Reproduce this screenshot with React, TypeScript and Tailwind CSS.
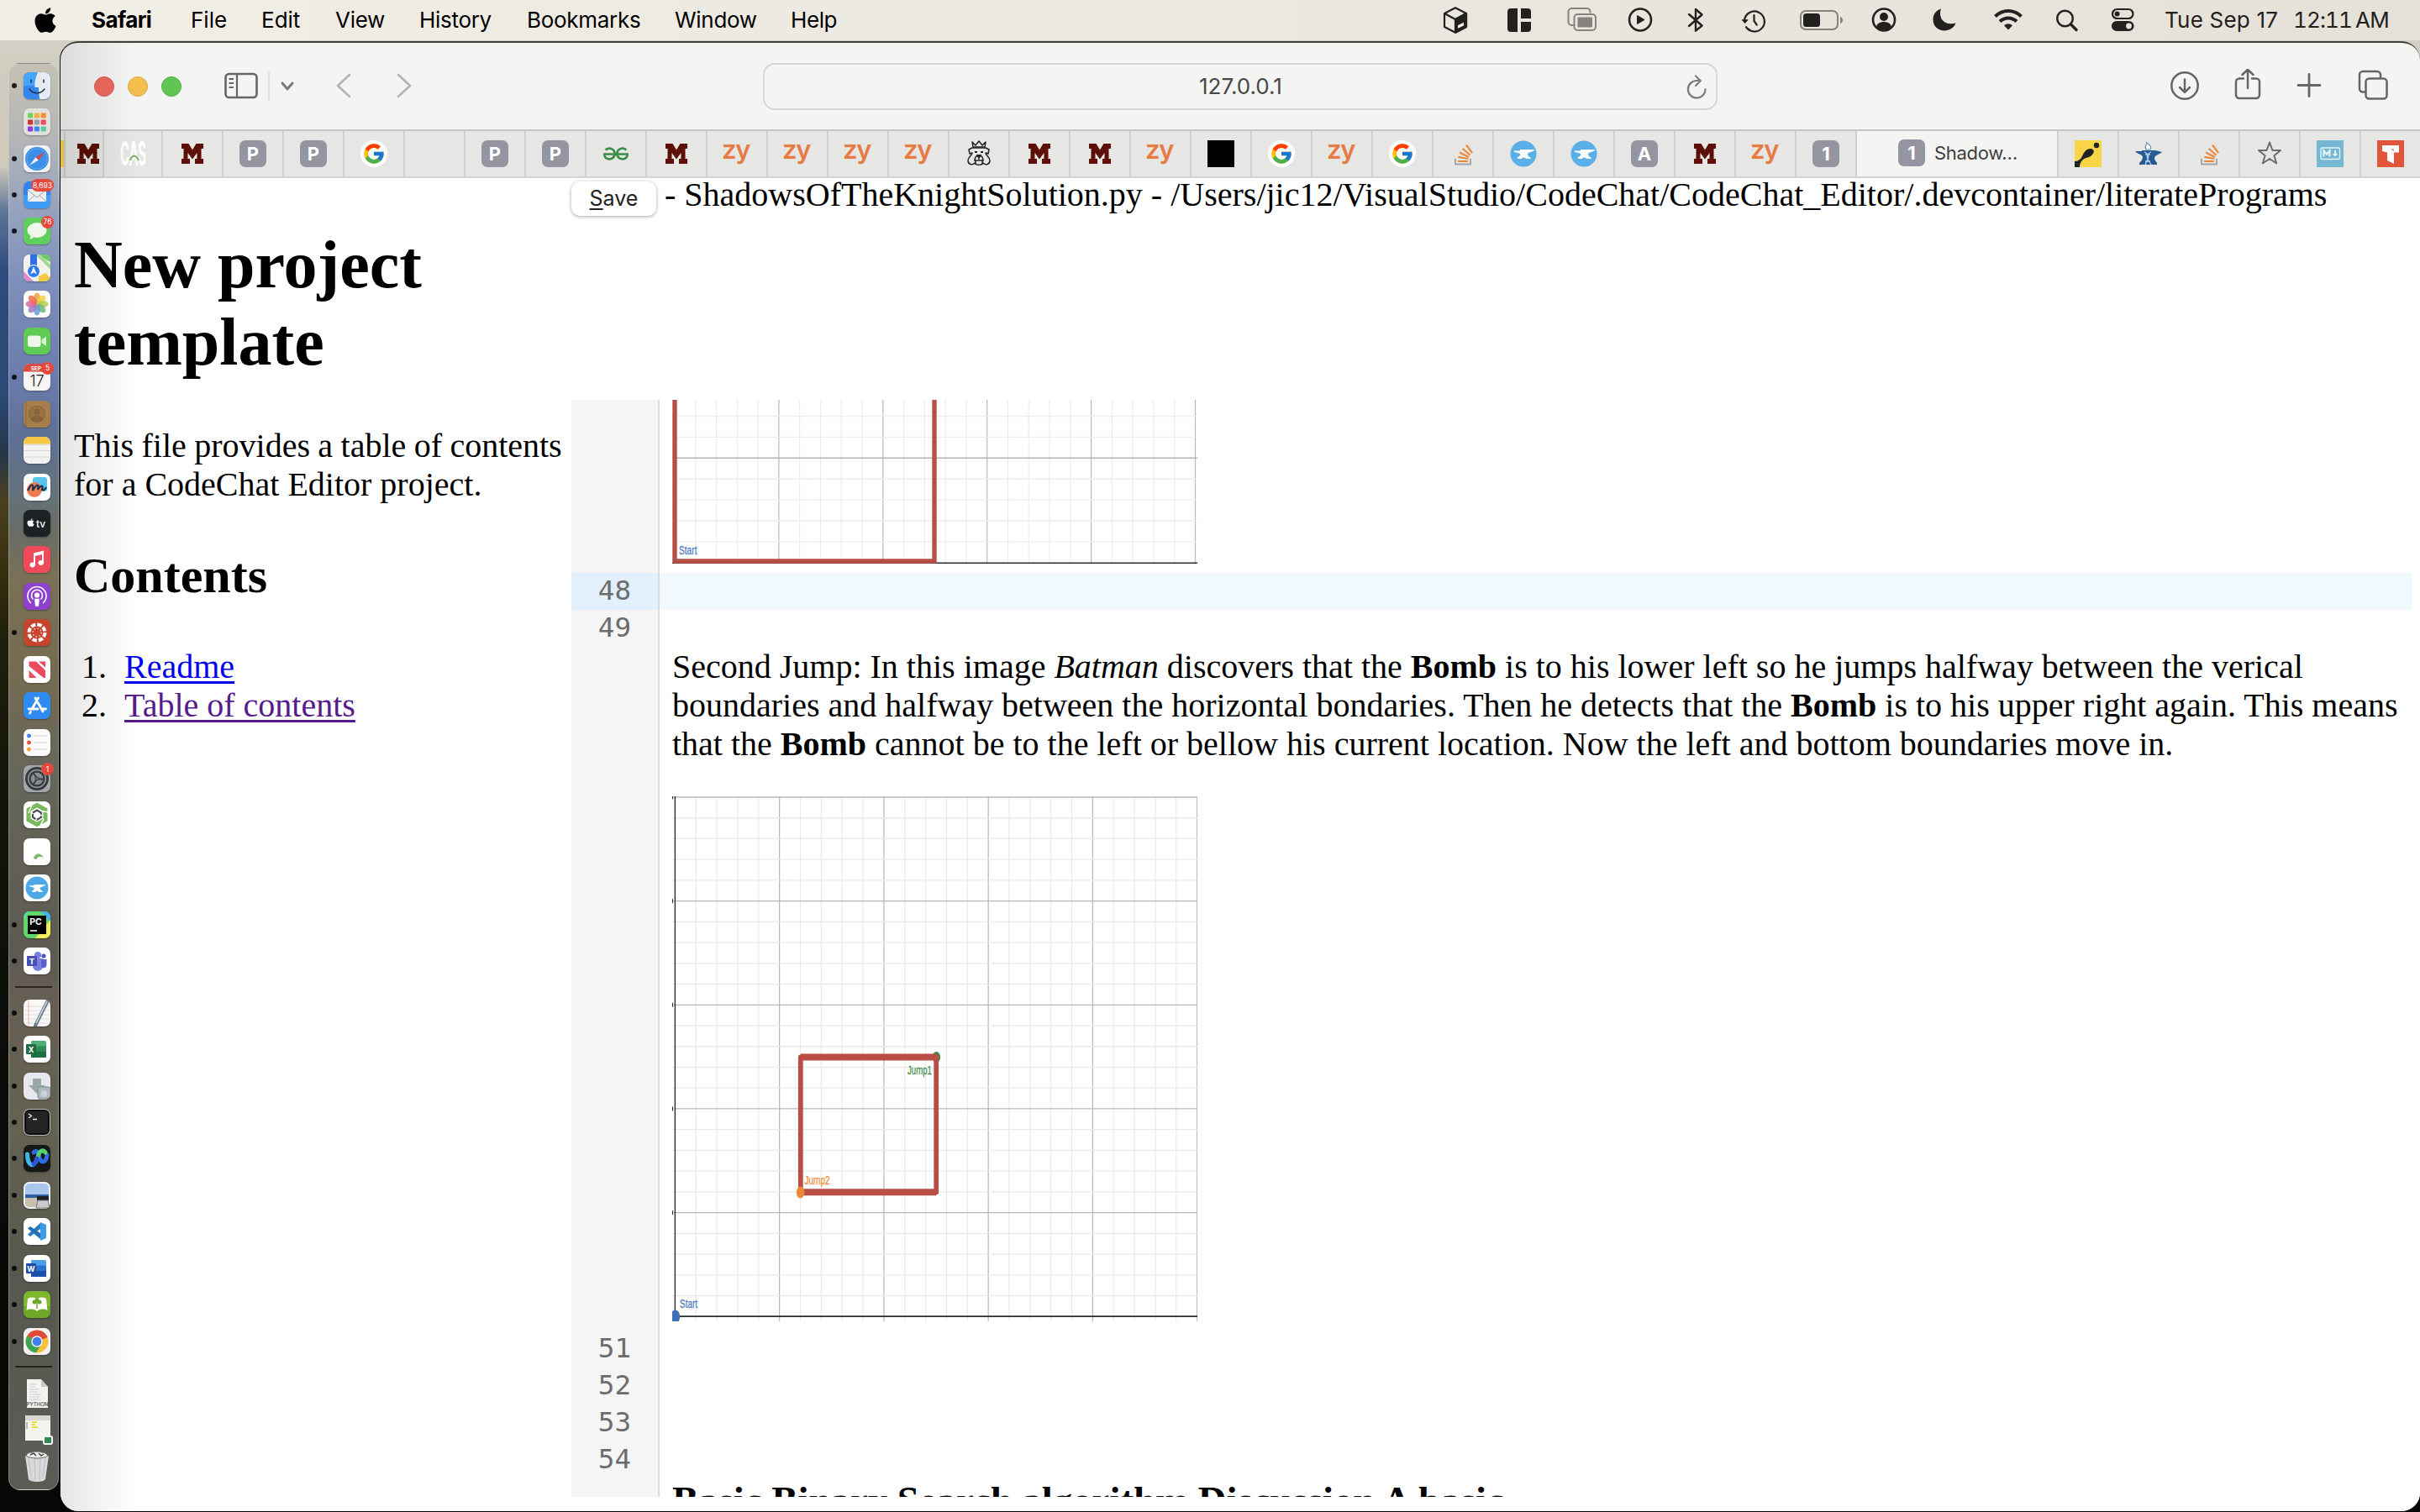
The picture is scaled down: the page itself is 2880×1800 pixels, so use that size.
import React from "react";
import { FaApple } from "react-icons/fa";
import { FcGoogle } from "react-icons/fc";
import { SiGeeksforgeeks } from "react-icons/si";

/* ---------- menu bar ---------- */

const menus: [string, string][] = [
  ["Safari", "w-[118px] font-bold tracking-[-0.6px]"],
  ["File", "w-[84px]"],
  ["Edit", "w-[88px]"],
  ["View", "w-[100px] tracking-[-0.3px]"],
  ["History", "w-[128px] tracking-[-0.3px]"],
  ["Bookmarks", "w-[176px] tracking-[-0.3px]"],
  ["Window", "w-[138px] tracking-[-0.3px]"],
  ["Help", "w-[100px] tracking-[-0.4px]"],
];

const ink = "#222120";

function StatusIcons() {
  return (
    <>
      <svg className="w-12 h-12 shrink-0" viewBox="0 0 48 48" fill="none" stroke={ink} strokeWidth="2.2" strokeLinejoin="round">
        <path d="M24 9.300 37 16v16L24 38.700 11 32V16z" />
        <path d="M11 16l13 7 13-7" />
        <path d="M24 23 37 16v16l-13 6.700z" fill={ink} />
        <path d="M27.500 33v-2.500l6-3v2.500z" fill="#fff" stroke="#e9e5dc" strokeWidth="1.2" />
      </svg>
      <svg className="ml-[28px] w-12 h-12 shrink-0" viewBox="0 0 48 48" fill={ink}>
        <path d="M14 10h8v28h-8a4 4 0 0 1-4-4V14a4 4 0 0 1 4-4zM26 10h8a4 4 0 0 1 4 4v8H26zM26 26h12v8a4 4 0 0 1-4 4h-8z" />
      </svg>
      <svg className="ml-[26px] w-12 h-12 shrink-0" viewBox="0 0 48 48" fill="none" stroke="#85837e" strokeWidth="2">
        <path d="M15 30h-2.500a4 4 0 0 1-4-4V14a4 4 0 0 1 4-4h18a4 4 0 0 1 4 4v1.500" />
        <rect x="15.500" y="17" width="25.500" height="19" rx="4" />
        <rect x="19.500" y="20.500" width="17.500" height="12" rx="1" fill="#85837e" stroke="none" />
      </svg>
      <svg className="ml-[22px] w-12 h-12 shrink-0" viewBox="0 0 48 48" fill="none" stroke={ink} strokeWidth="2.600">
        <circle cx="24" cy="23.500" r="13" />
        <path d="M20.500 18.500v10l8.500-5z" fill={ink} strokeWidth="1" />
      </svg>
      <svg className="ml-[18px] w-12 h-12 shrink-0" viewBox="0 0 48 48" fill="none" stroke={ink} strokeWidth="2.400" strokeLinejoin="round" strokeLinecap="round">
        <path d="M16 17l15.500 13.500L24 36.700V11l7.500 6.500L16 31" />
      </svg>
      <svg className="ml-[21px] w-12 h-12 shrink-0" viewBox="0 0 48 48" fill="none" stroke={ink} strokeWidth="2.200" strokeLinecap="round">
        <path d="M13 24a12 12 0 1 1 1.500 7.500a12 12 0 0 0 5 4.300" />
        <path d="M10.500 24l3.200 3.500 3-3.500z" fill={ink} strokeWidth="1" />
        <path d="M24.500 18v7l3.200 4.500" />
      </svg>
      <svg className="ml-[28px] w-14 h-12 shrink-0" viewBox="0 0 56 48">
        <rect x="4" y="13" width="44" height="22" rx="6" fill="none" stroke="#85837e" strokeWidth="2" />
        <rect x="7" y="16" width="20" height="16" rx="3.500" fill={ink} />
        <path d="M51 20c4 1 4 7 0 8z" fill="#85837e" />
      </svg>
      <svg className="ml-[23px] w-12 h-12 shrink-0" viewBox="0 0 48 48" fill="none" stroke={ink} strokeWidth="2.600">
        <circle cx="24" cy="23.500" r="13" />
        <circle cx="24" cy="20" r="5" fill={ink} stroke="none" />
        <path d="M15 32c1-8 17-8 18 0-4 5-14 5-18 0z" fill={ink} stroke="none" />
      </svg>
      <svg className="ml-[24px] w-12 h-12 shrink-0" viewBox="0 0 48 48" fill={ink}>
        <path d="M20 10.500c-4 12 5 20.500 17.500 17-5 13-27 12-27-4.500 0-6 4-11 9.500-12.500z" />
      </svg>
      <svg className="ml-[28px] w-12 h-12 shrink-0" viewBox="0 0 48 48" fill="none" stroke={ink} strokeWidth="4">
        <path d="M8.500 19.500c9-8.700 22-8.700 31 0" />
        <path d="M14 25.500c6-5.500 14-5.500 20 0" />
        <path d="M24 35.500l-5-5.300c3-2.700 7-2.700 10 0z" fill={ink} stroke="none" />
      </svg>
      <svg className="ml-[22px] w-12 h-12 shrink-0" viewBox="0 0 48 48" fill="none" stroke={ink} strokeWidth="2.500" strokeLinecap="round">
        <circle cx="21.500" cy="22" r="9.300" />
        <path d="M28.500 29l6.500 6.500" strokeWidth="3.400" />
      </svg>
      <svg className="ml-[18px] w-12 h-12 shrink-0" viewBox="0 0 48 48" fill="none" stroke={ink} strokeWidth="2.200">
        <rect x="12" y="11" width="24.500" height="11" rx="5.500" />
        <circle cx="17.600" cy="16.500" r="3" fill={ink} stroke="none" />
        <rect x="12" y="26" width="24.500" height="10" rx="5" fill={ink} />
        <circle cx="31.500" cy="31" r="3.400" fill="#e7e3da" stroke="none" />
      </svg>
    </>
  );
}

function MenuBar() {
  return (
    <header className="flex h-[48px] shrink-0 items-center bg-linear-to-r from-[#f1eee6] via-[#ebe8df] to-[#e5e1d9] text-[26px] leading-[48px] text-black">
      <div className="flex w-[109px] justify-center pr-[2px]">
        <FaApple className="h-[34px] w-auto" />
      </div>
      {menus.map(([m, c]) => (
        <span key={m} className={`shrink-0 whitespace-nowrap -mt-[1px] ${c}`}>{m}</span>
      ))}
      <div className="ml-auto flex items-center text-[#222120]">
        <StatusIcons />
        <span className="ml-[26px] flex w-[304px] -mt-[1px] whitespace-nowrap">
          <span className="w-[153px] tracking-[0.2px]">Tue Sep 17</span>
          <span className="tracking-[-0.9px] [font-variant-numeric:tabular-nums]">12:11</span>
          <span className="ml-[4px] tracking-[-0.6px]">AM</span>
        </span>
      </div>
    </header>
  );
}

/* ---------- tab icons ---------- */

const BlockM = () => (
  <svg className="h-[24px] w-[26px]" viewBox="0 0 26 24" fill="#5c0f06">
    <path d="M0 0h8.500l4.500 7.500L17.500 0H26v6h-2.500v12H26v6H16v-6h2.500v-7L13 18.500 7.500 11v7H10v6H0v-6h2.500V6H0z" />
  </svg>
);
const Zy = () => <span className="-mt-[10px] mr-[3px] text-[31px] leading-[32px] font-semibold tracking-[-1.500px] text-[#e67c43]">zy</span>;
const Letter = ({ c }: { c: string }) => (
  <span className="flex size-8 items-center justify-center rounded-[7px] bg-[#9495a1] text-[22px] font-bold text-white">{c}</span>
);
const G = () => (
  <span className="flex size-8 items-center justify-center rounded-full bg-white"><FcGoogle size={28} /></span>
);
const Stack = () => (
  <svg className="size-8" viewBox="0 0 32 32" fill="none">
    <path d="M7 22v6.500h18V22" stroke="#a3a7ad" strokeWidth="2" />
    <g stroke="#e98a3f" strokeWidth="2.200">
      <path d="M10 25h12M10.300 19.800l12 2.200M12 14.500l11 5.500M15.500 9.800l9 8M20 5.500l7 9.500" />
    </g>
  </svg>
);
const anvil = "M4 12.500h8V11h17c0 2-4 2.500-7 4-1.500 1-1.500 2.500 0 4l2.500 1.500V22H19c-1-2-4-2-5 0H9v-1.500l2-1.500c2-2 1.500-3-1-4-3-.3-5-1-6-2.500z";
const Anvil = () => (
  <svg className="size-8" viewBox="0 0 32 32">
    <circle cx="16" cy="16" r="15.500" fill="#5aafe8" />
    <path d={anvil} fill="#fff" />
  </svg>
);
const Cas = () => (
  <svg className="h-[52px] w-8" viewBox="0 -10 32 52">
    <text transform="translate(0 30) scale(.5 1)" x="0" y="0" fontSize="39" fontWeight="700" fill="#fff" textLength="62" lengthAdjust="spacingAndGlyphs" fontFamily="Inter, sans-serif">CAS</text>
    <path d="M12 24c2-7 7-7 10 0" stroke="#79b866" strokeWidth="2" fill="none" />
  </svg>
);
const Bulldog = () => (
  <svg className="size-8" viewBox="0 0 32 32" fill="none" stroke="#222" strokeWidth="1.500" strokeLinejoin="round">
    <path d="M9 8 8 2l4 4 4-5 4 5 4-4-1 6z" />
    <path d="M8 9h16l4 2-1 5-3-1c0 3 5 5 5 9 0 5-5 6-8 3-1 3-9 3-10 0-3 3-8 2-8-3 0-4 5-6 5-9l-3 1-1-5z" />
    <path d="M11 25c0-6 3-7 5-7s5 1 5 7M12 28v-4h8v4M16 18v5" />
    <path d="M11 14h3M18 14h3M14 18h4l-2 2z" fill="#222" strokeWidth="2.200" />
  </svg>
);
const YellowMark = () => (
  <svg className="size-8" viewBox="0 0 32 32">
    <rect width="32" height="32" fill="#f8d547" />
    <path d="M0 25c4 0 7-2 9-6 2-5 5-9 10-9 4 0 5 4 2 7-3 4-7 3-11 6-3 3-4 5-4 9H0z" fill="#1e2326" />
    <circle cx="26" cy="6" r="3.200" fill="#1e2326" />
  </svg>
);
const Torch = () => (
  <svg className="size-8" viewBox="0 0 32 32">
    <path d="M0 13h8v-1h16l8 2c-3 3-8 3-9 7 0 3 2 4 3 6v2H5v-2c2-2 4-4 4-7-1-4-6-3-9-7z" fill="#265a94" />
    <path d="M13 11c-3-5 2-6 1-8 3 2 6 5 4 8z" fill="#fff" stroke="#6b93bd" strokeWidth="1.200" />
    <path d="M11 14c9 4 3 10 1 15M19 14c-9 4-3 10 0 15M12 17h6M12 25h6" stroke="#b9cfe6" strokeWidth="1.300" fill="none" />
  </svg>
);
const Star = () => (
  <svg className="size-8" viewBox="0 0 32 32" fill="none" stroke="#6b6b6b" strokeWidth="2" strokeLinejoin="round">
    <path d="M16 2.500l3.500 9.500h9.500l-7.600 6.200 2.800 9.300L16 22l-8.200 5.500 2.800-9.300L3 12h9.500z" />
  </svg>
);
const Markdown = () => (
  <svg className="size-8" viewBox="0 0 32 32" fill="none" stroke="#e6f4f9">
    <rect width="32" height="32" fill="#76b8d3" stroke="none" />
    <rect x="5" y="9" width="22.500" height="13.500" rx="2" strokeWidth="1.300" />
    <path d="M8.500 19.500v-7l3.500 4 3.500-4v7M22 12v6" strokeWidth="2.200" />
    <path d="M18.800 16h6.400L22 19.500z" fill="#e6f4f9" stroke="none" />
  </svg>
);
const RedT = () => (
  <svg className="size-8" viewBox="0 0 32 32">
    <rect width="32" height="32" fill="#e15538" />
    <path d="M6 6h20v8.500h-6V28l-8-4V14.500L6 13z" fill="#fff" />
    <path d="M20 14.500V10l-4 .500 4 3z" fill="#e8a08e" />
  </svg>
);

const leftTabs: (() => React.ReactNode)[] = [
  BlockM, () => <Letter c="P" />, () => <Letter c="P" />, G, () => null, () => <Letter c="P" />, () => <Letter c="P" />,
  () => <SiGeeksforgeeks size={30} color="#3c8d47" />, BlockM, Zy, Zy, Zy, Zy, Bulldog, BlockM, BlockM, Zy,
  () => <span className="size-8 bg-black" />, G, Zy, G, Stack, Anvil, Anvil, () => <Letter c="A" />, BlockM, Zy, () => <Letter c="1" />,
];
const rightTabs = [YellowMark, Torch, Stack, Star, Markdown, RedT];

const cell = "flex shrink-0 items-center justify-center border-r-2 border-[#d0d0cf]";

function TabBar() {
  return (
    <div className="flex h-[58px] shrink-0 overflow-hidden border-t-2 border-b-2 border-t-[#c6c6c5] border-b-[#d3d3d2] bg-[#e6e6e5]">
      <div className={`${cell} w-[6px]`}><span className="h-8 w-full bg-[#f8d547]" /></div>
      <div className={`${cell} w-[46px] pl-[10px]`}><BlockM /></div>
      <div className={`${cell} w-[70px] pl-[2px]`}><Cas /></div>
      {leftTabs.map((I, i) => (
        <div key={i} className={`${cell} w-[72px]`}>{I()}</div>
      ))}
      <div className="-mt-[2px] flex w-[240px] shrink-0 items-center gap-[11px] border-r-2 border-[#d0d0cf] bg-[#f4f4f2] pl-[49px]">
        <Letter c="1" />
        <span className="text-[22px] tracking-[-0.3px] text-[#3f3f3f]">Shadow…</span>
      </div>
      {rightTabs.map((I, i) => (
        <div key={i} className={`${cell} w-[72px]`}><I /></div>
      ))}
    </div>
  );
}

function Toolbar() {
  return (
    <div className="flex h-[103px] shrink-0 items-center text-[#656563]">
      <div className="flex w-[195px] gap-4 pl-[40px]">
        <span className="size-6 rounded-full border border-[#d5574c] bg-[#ed6a5e]" />
        <span className="size-6 rounded-full border border-[#dba53b] bg-[#f5bf4f]" />
        <span className="size-6 rounded-full border border-[#4fae3f] bg-[#61c554]" />
      </div>
      <svg className="h-[32px] w-[40px] shrink-0 -mt-[2px]" viewBox="0 0 40 32" fill="none" stroke="currentColor" strokeWidth="2.600">
        <rect x="1.500" y="2" width="37" height="28" rx="4" />
        <path d="M15 2v28" strokeWidth="2.200" />
        <path d="M5.500 8h5.500M5.500 13h5.500M5.500 18h5.500" strokeWidth="2" />
      </svg>
      <span className="ml-[12px] h-[36px] w-[2px] bg-[#e2e2e0]" />
      <svg className="ml-[12px] h-[14px] w-[18px]" viewBox="0 0 18 14" fill="none" stroke="#7a7a78" strokeWidth="3" strokeLinecap="round" strokeLinejoin="round">
        <path d="M3 3l6 7 6-7" />
      </svg>
      <svg className="ml-[47px] h-[32px] w-[24px] -mt-[2px]" viewBox="0 0 24 32" fill="none" stroke="#b4b4b2" strokeWidth="2.600" strokeLinecap="round" strokeLinejoin="round">
        <path d="M18 3 4 16l14 13" />
      </svg>
      <svg className="ml-[48px] h-[32px] w-[24px] -mt-[2px]" viewBox="0 0 24 32" fill="none" stroke="#b4b4b2" strokeWidth="2.600" strokeLinecap="round" strokeLinejoin="round">
        <path d="M4 3l14 13L4 29" />
      </svg>
      <div className="ml-[414px] flex h-[56px] w-[1136px] shrink-0 items-center rounded-[14px] border-2 border-[#d6d6d5] pl-[517px]">
        <span className="w-[579px] text-[26px] text-[#474746]">127.0.0.1</span>
        <svg className="h-[30px] w-[26px]" viewBox="0 0 26 30" fill="none" stroke="#7c7c7a" strokeWidth="2.200" strokeLinecap="round" strokeLinejoin="round">
          <path d="M16.500 8H13a10.300 10.300 0 1 0 10.500 10.300" />
          <path d="M12 2.500l5.800 5.800L12 14" />
        </svg>
      </div>
      <svg className="ml-[538px] h-[40px] w-[36px] -mt-[2px]" viewBox="0 0 36 40" fill="none" stroke="currentColor" strokeWidth="2.500" strokeLinecap="round" strokeLinejoin="round">
        <circle cx="18" cy="20" r="15.700" /><path d="M18 12.500v15M12 22l6 5.800 6-5.800" />
      </svg>
      <svg className="ml-[40px] h-[40px] w-[34px] -mt-[2px]" viewBox="0 0 34 40" fill="none" stroke="currentColor" strokeWidth="2.500" strokeLinecap="round" strokeLinejoin="round">
        <path d="M12 11.500H7a4 4 0 0 0-4 4V31a4 4 0 0 0 4 4h20a4 4 0 0 0 4-4V15.500a4 4 0 0 0-4-4h-5M17 23V1M10.500 7 17 .800 23.500 7" />
      </svg>
      <svg className="ml-[41px] h-[40px] w-[30px] -mt-[2px]" viewBox="0 0 30 40" fill="none" stroke="currentColor" strokeWidth="2.800" strokeLinecap="round">
        <path d="M15 6.500v26M2 19.500h26" />
      </svg>
      <svg className="ml-[42px] h-[40px] w-[38px] -mt-[2px]" viewBox="0 0 38 40" fill="none" stroke="currentColor" strokeWidth="2.500" strokeLinejoin="round">
        <path d="M10 27.500H7a4 4 0 0 1-4-4V7a4 4 0 0 1 4-4h17a4 4 0 0 1 4 4v4.500" />
        <rect x="10.500" y="11.500" width="25" height="24" rx="4" />
      </svg>
    </div>
  );
}

/* ---------- dock ---------- */

type Tile = { bg: string; art?: React.ReactNode; dot?: boolean; badge?: string };

const T = (p: { x: number; y: number; s: number; f?: string; w?: number; children: string }) => (
  <text x={p.x} y={p.y} fontSize={p.s} fill={p.f ?? "#fff"} fontWeight={p.w ?? 700} textAnchor="middle" fontFamily="Inter, sans-serif">{p.children}</text>
);

const petals = ["#f2a43a", "#f0d43c", "#b6cf4a", "#6dbb78", "#6aa0d8", "#9a80c4", "#d46aa0", "#ec6b56"];
const grid9 = ["#6cd45b", "#f6b03c", "#f0913a", "#d0342c", "#9a9da1", "#ee4b63", "#8b3fd0", "#3f8bf2", "#5cc9a0"];

const office = (c1: string, c2: string, c3: string, l: string) => (
  <>
    <rect x="9" y="6" width="18" height="20" rx="1.500" fill={c1} />
    <path d="M9 12.500h18v6.500H9z" fill={c2} /><path d="M9 19h18v7H9z" fill={c3} />
    <rect x="3" y="10" width="12" height="12" rx="1" fill={c3} />
    <T x={9} y={19.500} s={9}>{l}</T>
  </>
);

const tiles: Tile[] = [
  { bg: "#2f7df0", dot: true, art: <><rect width="32" height="32" fill="#45a6f7" /><rect y="16" width="18" height="16" fill="#2f6fe8" opacity=".6" /><path d="M17 0c-3 7-4 12-3.500 18H18c0 5 .5 9 1.500 14H32V0z" fill="#e6eaf2" /><path d="M7 20c5 6.500 13 6.500 18 0M9 9v3M24 9v3" stroke="#1b2733" strokeWidth="1.400" fill="none" strokeLinecap="round" /></> },
  { bg: "#e3e1de", art: <>{grid9.map((c, i) => <rect key={i} x={5 + (i % 3) * 7.800} y={5.500 + Math.floor(i / 3) * 8} width="6.200" height="6" rx="1.300" fill={c} />)}</> },
  { bg: "#f0f0f0", dot: true, art: <><circle cx="16" cy="16" r="14" fill="#3b8fe6" /><circle cx="16" cy="16" r="12" fill="none" stroke="#9ccbf5" strokeWidth="1" strokeDasharray="1 1.200" /><path d="M25 8 14.500 14.300l3.200 3.400z" fill="#e8443a" /><path d="M7 24l7.500-9.700 3.200 3.400z" fill="#f3f3f3" /></> },
  { bg: "#3f9cf5", dot: true, badge: "8,693", art: <><rect width="32" height="16" fill="#2f74e8" opacity=".6" /><rect x="5" y="9" width="22" height="15" rx="1.500" fill="#eceef0" /><path d="M5 10l11 9 11-9M5 24l8-7.500M27 24l-8-7.500" stroke="#9aa0a6" strokeWidth="1" fill="none" /></> },
  { bg: "#5fcf5b", dot: true, badge: "76", art: <><ellipse cx="16" cy="15" rx="11.500" ry="9" fill="#eef7ea" /><path d="M8 20c1 3 0 4-1 5.500 3 0 5-1.500 6-3z" fill="#e3f3df" /></> },
  { bg: "#f2f1ec", art: <><path d="M16 0h16v9z" fill="#6ccb64" /><path d="M20 0l12 12v6L14 0z" fill="#a6d99a" /><path d="M8 0h8v20H8z" fill="#2f6fe0" /><path d="M0 20l12 12H0z" fill="#e08ac9" /><path d="M18 26l8-4 6 6v4H18z" fill="#f4c93f" /><circle cx="12" cy="20" r="7.500" fill="#2e7af0" stroke="#fff" strokeWidth="1" /><path d="M12 14.500l3.800 9-3.800-2.300-3.800 2.300z" fill="#fff" /></> },
  { bg: "#fbfbfb", art: <>{petals.map((c, i) => <ellipse key={i} cx="16" cy="9" rx="4" ry="6.500" fill={c} opacity=".85" transform={`rotate(${i * 45} 16 16)`} />)}</> },
  { bg: "#5fcb54", art: <><rect x="5" y="9.500" width="15.500" height="13.500" rx="3" fill="#eef6ea" /><path d="M21.500 14.500l5.500-4v11.500l-5.500-4z" fill="#d9f0d2" /></> },
  { bg: "#f6f5f4", dot: true, badge: "5", art: <><rect width="32" height="9.500" fill="#dd4a40" /><T x={15} y={7.800} s={6.500}>SEP</T><T x={16} y={27} s={18} f="#222" w={300}>17</T></> },
  { bg: "#a67e4b", art: <><circle cx="16" cy="16" r="9.500" fill="#9a7341" stroke="#846238" /><circle cx="16" cy="13" r="3.600" fill="#84633a" /><path d="M9 22c2-6 12-6 14 0-3 3.500-11 3.500-14 0z" fill="#84633a" /><path d="M3 0v32" stroke="#8d6a3d" /></> },
  { bg: "#f3f2f0", art: <><rect width="32" height="8.500" fill="#f7c843" /><path d="M0 9.500h32M0 16.500h32M0 24h32" stroke="#d8d6d2" strokeWidth="1" /></> },
  { bg: "#fdfdfd", art: <><rect x="11" y="4" width="17" height="17" rx="3" fill="#59c3ee" /><circle cx="13" cy="19" r="9" fill="#f07a54" /><path d="M5 20c5-10 7-8 6 0 5-9 8-8 6-1 4-6 7-6 5 0 2 1 4-1 5-3" stroke="#17324f" strokeWidth="2.200" fill="none" /></> },
  { bg: "#1c2124", art: <><FaApple x="3" y="9.5" size={11} color="#fff" /><T x={20.500} y={20.500} s={12} w={500}>tv</T></> },
  { bg: "#ee4a5a", art: <path d="M12 8.500l12-3v14.500a3.300 3 0 1 1-2-2.800V10l-8 2v10.500a3.300 3 0 1 1-2-2.800z" fill="#fff" /> },
  { bg: "#9040cf", art: <g fill="none" stroke="#fff" strokeWidth="1.600"><path d="M9 24a11 11 0 1 1 14 0M11.500 19.500a6.500 6.500 0 1 1 9 0" /><circle cx="16" cy="14.500" r="2.300" fill="#fff" /><path d="M14 19.500h4l-.700 7.500h-2.600z" fill="#fff" /></g> },
  { bg: "#c8452d", dot: true, art: <g fill="none" stroke="#fff"><circle cx="16" cy="16" r="9.500" strokeWidth="4" strokeDasharray="5.460 2" /><circle cx="16" cy="16" r="5" strokeWidth="1.300" strokeDasharray="1.300 2.620" /></g> },
  { bg: "#fff", art: <g fill="#ec4b5f"><path d="M6.500 6.500H15l11 10.500v9h-2L6.500 12z" /><path d="M18 6.500h8v7zM6.500 17l9 9h-9z" /></g> },
  { bg: "#2f8bf0", art: <g stroke="#fff" strokeWidth="2.800" strokeLinecap="round"><path d="M17.500 7 10 20M14 7l9 16M6 20h11M22 20h4.500M8.500 23.500l-1 1.500" /></g> },
  { bg: "#fbfbfa", art: <><g stroke="#cfcfcf" strokeWidth="1"><path d="M12 8h16M12 16h16M12 24h16" /></g><circle cx="6.500" cy="8" r="2.400" fill="#3c82f0" /><circle cx="6.500" cy="16" r="2.400" fill="#e2503f" /><circle cx="6.500" cy="24" r="2.400" fill="#f09a3a" /></> },
  { bg: "#a3a7ab", badge: "1", art: <g fill="none" stroke="#383b3d"><circle cx="16" cy="16" r="12.500" strokeWidth="3" /><circle cx="16" cy="16" r="8.500" strokeWidth="2.500" fill="#8b8f92" /><path d="M16 16l9 1M16 16l-5-8M16 16l-5 8" strokeWidth="1.800" /><circle cx="16" cy="16" r="2" fill="#777" /></g> },
  { bg: "#fff", art: <g fill="none"><path d="M16 4.500 26 10v12L16 27.500 6 22V10z" stroke="#79b95c" strokeWidth="5" /><path d="M11 2l-5 12M30 13l-12-2M19 31l5-10" stroke="#fff" strokeWidth="1.500" /><path d="M16 10.500l5 3v5.500L16 22l-5-3v-5.500z" stroke="#4a4f54" strokeWidth="2.200" strokeDasharray="8 1.500" /></g> },
  { bg: "#fff", art: <path d="M12 24c1-6 8-8 12-1-4-2-7-2-8.500 2z" fill="#79b866" /> },
  { bg: "#fff", art: <><circle cx="16" cy="16" r="13.500" fill="#4fa9e6" /><path d={anvil} fill="#fff" transform="translate(3 3.300) scale(.8)" /></> },
  { bg: "#5fd869", dot: true, art: <><path d="M20 0h12v13z" fill="#3eb7e8" /><path d="M32 10v22H14z" fill="#f5ee5a" /><path d="M0 0h8L0 10z" fill="#4fdc9c" /><rect x="5" y="5" width="22" height="22" fill="#000" /><T x={14.500} y={16} s={10.500}>PC</T><path d="M8 23h8" stroke="#fff" strokeWidth="1.600" /></> },
  { bg: "#fff", dot: true, art: <><circle cx="17" cy="9" r="4" fill="#7a80e0" /><circle cx="24" cy="10" r="2.600" fill="#4c53bc" /><path d="M11 13h12v9a6 6 0 0 1-12 0z" fill="#7a80e0" /><path d="M21 14h6.500v6.500a4 4 0 0 1-6.500 3z" fill="#5a60c8" /><rect x="4" y="10" width="12" height="12" rx="1" fill="#4850b8" /><T x={10} y={19.500} s={9.500}>T</T></> },
];

const tiles2: Tile[] = [
  { bg: "#f8f8f7", dot: true, art: <><path d="M0 8h32M0 13h32M0 18h32M0 23h32M0 28h32" stroke="#d5d5da" strokeWidth=".8" /><path d="M6 0v32" stroke="#eaa0a0" strokeWidth=".8" /><path d="M29 1 14 31" stroke="#6f7e8a" strokeWidth="4" strokeLinecap="round" /><path d="M28 2 15 28" stroke="#d0dbe4" strokeWidth="1.400" /></> },
  { bg: "#fff", dot: true, art: office("#4fae72", "#2f8a55", "#1f6e43", "X") },
  { bg: "#e6e8ee", dot: true, art: <><path d="M11 7h10v8h5L16 25 6 15h5z" fill="#9ba6a8" /><rect x="17" y="17" width="15" height="14" rx="2" fill="#aeb9bf" stroke="#7d8a91" /><circle cx="24.500" cy="25" r="4" fill="#c8d1d5" /></> },
  { bg: "#b9c0c4", dot: true, art: <><rect x="1" y="1" width="30" height="30" rx="6" fill="#0b0b0b" /><rect x="3" y="3" width="26" height="26" rx="3" fill="#242424" /><path d="M6 6l3.500 2.500L6 11M11 12.500h5" stroke="#eee" strokeWidth="1.300" fill="none" /></> },
  { bg: "#161719", dot: true, art: <g fill="none" strokeWidth="5" strokeLinecap="round"><path d="M4.500 11c0 15 9 17 11.500 5" stroke="#3fb8e8" /><path d="M12 9c4-4 6 1 7 6 2 8 8 6 9-3" stroke="#2f6ae8" /><path d="M17 15c1-8 6-10 9-6" stroke="#54cf6e" /><path d="M16 16c-1 4-2 6-4 7" stroke="#2f50dc" /></g> },
  { bg: "#eef2f5", dot: true, art: <><rect x="2" y="2" width="28" height="28" rx="5" fill="#a8c6ee" /><path d="M2 15h28v4H2z" fill="#2d5fa0" /><path d="M2 19h28v6a5 5 0 0 1-5 5H7a5 5 0 0 1-5-5z" fill="#c6bfae" /><path d="M16 17h14v5H16z" fill="#1e2022" /><path d="M17 22h12l2 9H15z" fill="#c8cbcd" stroke="#777" /></> },
  { bg: "#fff", dot: true, art: <><path d="M20 6v7L8 22l-3-2.500z" fill="#2a7cc4" /><path d="M20 25v-7L8 10l-3 2.500z" fill="#2570b5" /><path d="M20 5l7 3v16l-7 3z" fill="#3c9be6" /></> },
  { bg: "#fff", dot: true, art: office("#4ca0e8", "#2b72d0", "#1d4fa8", "W") },
  { bg: "#7fb82c", dot: true, art: <><rect y="18" width="32" height="14" fill="#5d9420" opacity=".5" /><path d="M5 9c4-2 8-2 11 1 3-3 7-3 11-1l1.500 14c-4-2-9-2-12.500 1-3.500-3-8.500-3-12.500-1z" fill="#fff" /><circle cx="13" cy="13" r="2.500" fill="#6fa52a" /><circle cx="19" cy="13" r="2.500" fill="#6fa52a" /><circle cx="16" cy="11" r="2.500" fill="#6fa52a" /><path d="M16 12v9" stroke="#6fa52a" strokeWidth="1.500" /></> },
  { bg: "#f2f2f2", dot: true, art: <><circle cx="16" cy="16" r="13.500" fill="#f4c236" /><path d="M16 16 4.300 9.300a13.500 13.500 0 0 1 23.400 0L28.500 11z" fill="#de4b3c" /><path d="M16 16 4.300 9.300A13.500 13.500 0 0 0 15 29.500l6-10z" fill="#3ea556" /><path d="M16 9.500h12.200" stroke="#de4b3c" strokeWidth="1" /><circle cx="16" cy="16" r="6.700" fill="#fff" /><circle cx="16" cy="16" r="5.400" fill="#3f7ff0" /></> },
];

function DockItem({ t }: { t: Tile }) {
  return (
    <div className="relative flex h-[43.440px] shrink-0 items-center">
      <span className={t.dot ? "ml-[3px] size-[6px] rounded-full bg-black/85" : "ml-[3px] size-[6px]"} />
      <svg className="ml-[8px] size-8 rounded-[7px] shadow-[0_1px_2px_rgba(0,0,0,0.3)]" viewBox="0 0 32 32" style={{ background: t.bg }}>{t.art}</svg>
      {t.badge && (
        <span className="absolute top-[3px] right-[5px] flex h-[15px] min-w-[15px] items-center justify-center rounded-full bg-[#e5493b] px-[2px] text-[8.500px] leading-none text-white">{t.badge}</span>
      )}
    </div>
  );
}

function Dock() {
  return (
    <aside className="mt-[27px] ml-[10px] flex h-[1699px] w-[60px] shrink-0 flex-col rounded-[14px] border border-white/25 bg-[linear-gradient(180deg,#c4c0b3_0%,#b5b6b6_5%,#97a3bd_10%,#7f90bc_15%,#6a7cab_22%,#5f7096_26%,#63727c_30%,#6a6d65_33%,#7a7056_36%,#756c52_42%,#66665a_50%,#5e5a52_62%,#665f54_66%,#646251_75%,#57584f_85%,#5b5c56_100%)] pt-[4px]">
      {tiles.map((t, i) => <DockItem key={i} t={t} />)}
      <span className="my-[8px] ml-[7px] h-[2px] w-[44px] shrink-0 bg-[#2d2621]" />
      {tiles2.map((t, i) => <DockItem key={i} t={t} />)}
      <span className="mt-[8px] ml-[7px] h-[2px] w-[44px] shrink-0 bg-[#26241f]" />
      <svg className="mt-[13px] ml-[18px] h-[36px] w-[32px] shrink-0" viewBox="0 0 32 36">
        <path d="M3 1h17l8 9v25H3z" fill="#f3f3f2" /><path d="M20 1v9h8z" fill="#c9c9c8" />
        <path d="M6 7h9M6 10h7M6 13h12M6 16h10M6 19h14M6 22h12M6 25h14" stroke="#c4c4c4" strokeWidth=".8" />
        <T x={15.500} y={33} s={6} f="#444" w={500}>PYTHON</T>
      </svg>
      <svg className="mt-[7px] ml-[18px] h-[36px] w-[36px] shrink-0" viewBox="0 0 36 36">
        <path d="M1 1h30v30H1z" fill="#f4f3ef" /><path d="M1 1h30v6H1z" fill="#d9d8d2" />
        <path d="M9 12h4M9 15h7M9 9h6" stroke="#e6df3c" strokeWidth="2" /><path d="M3 9v8" stroke="#bbb" strokeWidth="2" />
        <rect x="22" y="25" width="12" height="11" rx="3" fill="#fff" /><rect x="24" y="27" width="8" height="7" fill="#2f8a55" />
      </svg>
      <svg className="mt-[7px] ml-[17px] h-[40px] w-[32px] shrink-0" viewBox="0 0 32 40">
        <path d="M2 6h28l-4 28c-2 4-18 4-20 0z" fill="#d9dadb" />
        <path d="M6 8l3 24M13 9l1 26M20 9l-1 26M26 8l-3 24" stroke="#c3c5c7" strokeWidth="1.500" />
        <path d="M3 6c2-5 7-3 9-5 4 1 6-1 9 1 3 0 6 1 8 4-5 4-21 4-26 0z" fill="#ececeb" stroke="#6a6a6a" strokeWidth="1" />
        <path d="M8 5l4-2 3 3M18 3l3 3 3-2" stroke="#3d4a45" strokeWidth="1.500" fill="none" />
      </svg>
    </aside>
  );
}

/* ---------- plots ---------- */

const seq = (from: number, to: number, step: number) => {
  const out: number[] = [];
  for (let v = from; v <= to + 0.01; v += step) out.push(v);
  return out;
};

const Label = (p: { x: number; y: number; w: number; f: string; children: string }) => (
  <text x={p.x} y={p.y} fontSize="15" textLength={p.w} lengthAdjust="spacingAndGlyphs" fill={p.f} stroke={p.f} strokeWidth=".25" fontFamily="Liberation Sans, sans-serif">{p.children}</text>
);

function FirstPlot() {
  const xs = seq(3, 623, 24.780);
  const ys = seq(19.500, 180, 24.900);
  return (
    <svg className="block h-[195px] w-[625px]" viewBox="0 0 625 195">
      {xs.map((x, i) => <path key={i} d={`M${x} 0V194`} stroke={i % 5 ? "#ececec" : "#b9b9b9"} strokeWidth="1.200" />)}
      {ys.map((y, i) => <path key={i} d={`M0 ${y}H625`} stroke={i === 2 ? "#b3b3b3" : "#ededed"} strokeWidth="1.400" />)}
      <path d="M0 194.200H625" stroke="#2b2b2b" strokeWidth="1.400" />
      <path d="M3 0V192H312V0" fill="none" stroke="#b94e46" strokeWidth="5.400" />
      <path d="M0 190l3 -1 3 4z" fill="#4472b8" opacity=".4" />
      <Label x={8} y={184} w={21.500} f="#4a78bd">Start</Label>
    </svg>
  );
}

function SecondPlot() {
  const xs = seq(3.400, 625, 24.850);
  const ys = seq(1, 618, 24.730);
  return (
    <svg className="block h-[625px] w-[625px]" viewBox="0 0 625 625">
      {xs.map((x, i) => <path key={i} d={`M${x} 0V625`} stroke={i % 5 ? "#eaeaea" : "#b6b6b6"} strokeWidth="1.200" />)}
      {ys.map((y, i) => <path key={i} d={`M0 ${y}H625`} stroke={i % 5 ? "#eaeaea" : "#b8b8b8"} strokeWidth="1.300" />)}
      {ys.filter((_, i) => i % 5 === 0).map((y) => <path key={y} d={`M.5 ${y - 2.500}v5`} stroke="#333" strokeWidth="1" />)}
      <path d="M3.400 0V619" stroke="#333" strokeWidth="1.400" />
      <path d="M0 619.200H625" stroke="#2b2b2b" strokeWidth="1.800" />
      <ellipse cx="314.300" cy="310.500" rx="4.800" ry="6.500" fill="#3f8a45" />
      <g stroke="#b94e46" strokeLinecap="round">
        <path d="M152.800 310.500V471.300M314.200 310.500V471.300" strokeWidth="5.800" />
        <path d="M152.800 310.500H314.200M152.800 471.300H314.200" strokeWidth="8" strokeLinecap="butt" />
      </g>
      <ellipse cx="152.600" cy="471.500" rx="4.700" ry="7" fill="#ed8936" />
      <ellipse cx="3.600" cy="619.500" rx="5.600" ry="8" fill="#3f6fb7" />
      <Label x={280} y={331} w={29} f="#3f8a45">Jump1</Label>
      <Label x={157.500} y={461.500} w={30} f="#ed8936">Jump2</Label>
      <Label x={9} y={609} w={21} f="#4a78bd">Start</Label>
    </svg>
  );
}

/* ---------- page ---------- */

const Num = ({ n }: { n: number }) => (
  <div className="h-[44px] pr-[32px] text-right font-['DejaVu_Sans_Mono',monospace] text-[32.500px] leading-[43px] text-[#6c6c6c]">{n}</div>
);
const gut = "w-[105px] shrink-0 border-r-2 border-[#dddddd] bg-[#f5f5f5]";

function Editor() {
  return (
    <div className="flex h-[1306px] flex-col overflow-hidden">
      <div className="flex h-[206px] shrink-0">
        <div className={gut} />
        <div className="pl-[15px]"><FirstPlot /></div>
      </div>
      <div className="mr-[9px] flex h-[44px] shrink-0 bg-[#f1f9fe]">
        <div className="w-[105px] shrink-0 border-r-2 border-[#dddddd] bg-[#e2f0fd]"><Num n={48} /></div>
      </div>
      <div className="flex h-[858px] shrink-0">
        <div className={gut}><Num n={49} /></div>
        <div className="pl-[15px] pt-[45px]">
          <p className="mb-[39px] text-[40px] leading-[46px] whitespace-nowrap">
            Second Jump: In this image <i>Batman</i> discovers that the <b>Bomb</b> is to his lower left so he jumps halfway between the verical<br />
            boundaries and halfway between the horizontal bondaries. Then he detects that the <b>Bomb</b> is to his upper right again. This means<br />
            that the <b>Bomb</b> cannot be to the left or bellow his current location. Now the left and bottom boundaries move in.
          </p>
          <SecondPlot />
        </div>
      </div>
      <div className="flex grow">
        <div className={gut}>{[51, 52, 53, 54].map((n) => <Num key={n} n={n} />)}</div>
        <h3 className="h-[23px] self-end overflow-visible pl-[15px] text-[46.800px] leading-[54px] font-bold whitespace-nowrap">
          Basic Binary Search algorithm Discussion A basic
        </h3>
      </div>
    </div>
  );
}

function Page() {
  return (
    <div className="flex min-h-0 grow overflow-hidden bg-white font-['Liberation_Serif',serif] text-black">
      <nav className="w-[608px] shrink-0 pl-[16px] pt-[57px] text-[40px] leading-[46px]">
        <h1 className="text-[80px] leading-[92px] font-bold">New project<br />template</h1>
        <p className="mt-[55px] whitespace-nowrap"><span className="[word-spacing:-0.6px]">This file provides a table of contents</span><br />for a CodeChat Editor project.</p>
        <h2 className="mt-[51px] text-[60px] leading-[69px] font-bold">Contents</h2>
        <ol className="mt-[51px]">
          <li className="flex"><span className="w-[60px] pl-[9px]">1.</span><a className="text-[#0000ee] underline decoration-[2.500px] underline-offset-[4px]">Readme</a></li>
          <li className="flex"><span className="w-[60px] pl-[9px]">2.</span><a className="text-[#551a8b] underline decoration-[2.500px] underline-offset-[4px]">Table of contents</a></li>
        </ol>
      </nav>
      <main className="flex min-w-0 grow flex-col">
        <div className="flex h-[264px] shrink-0">
          <button className="mt-[4px] h-[41px] w-[101px] shrink-0 rounded-[10px] bg-white font-[Inter,sans-serif] text-[25px] text-[#222] shadow-[0_1px_4px_rgba(0,0,0,0.35)]">
            <span className="underline decoration-2 underline-offset-[3px]">S</span>ave
          </button>
          <span className="ml-[10px] text-[40px] leading-[39px] whitespace-nowrap">
            - ShadowsOfTheKnightSolution.py - /Users/jic12/VisualStudio/CodeChat/CodeChat_Editor/.devcontainer/literatePrograms
          </span>
        </div>
        <Editor />
      </main>
    </div>
  );
}

export default function App() {
  return (
    <div className="flex h-[1800px] w-[2880px] flex-col overflow-hidden bg-[linear-gradient(180deg,#d8d5cb_0%,#d0ccc0_5%,#cfcab9_11%,#5d7596_14%,#2f4a7c_18%,#2c4a76_26%,#24374a_30%,#4a4020_33%,#3a3210_37%,#201f0a_42%,#12150a_52%,#0b0c08_70%,#070706_100%)] font-[Inter,sans-serif]">
      <MenuBar />
      <div className="flex min-h-0 grow">
        <Dock />
        <section className="relative mt-[1px] ml-[1px] flex h-[1750px] w-[2809px] shrink-0 flex-col overflow-hidden rounded-[22px] border-t-2 border-l border-t-[#3f3f3c] border-l-[#15171c] bg-[#f4f4f2]">
          <Toolbar />
          <TabBar />
          <Page />
          <div className="pointer-events-none absolute inset-y-0 left-0 w-[90px] bg-linear-to-r from-black/10 to-transparent" />
        </section>
      </div>
    </div>
  );
}
